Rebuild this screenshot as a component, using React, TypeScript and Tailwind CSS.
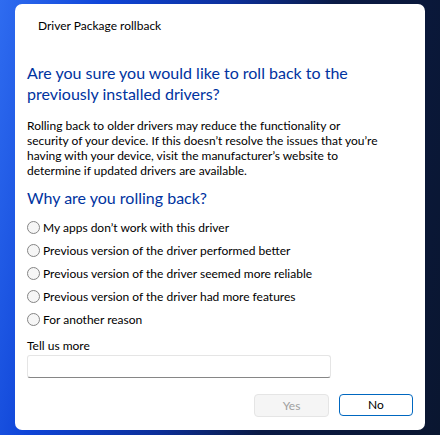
import React from "react";

const reasons = [
  "My apps don\u2019t work with this driver",
  "Previous version of the driver performed better",
  "Previous version of the driver seemed more reliable",
  "Previous version of the driver had more features",
  "For another reason",
];

function Radio({ label }: { label: string }) {
  return (
    <div className="flex items-center h-[23px]">
      <span className="w-[13px] h-[13px] rounded-full border border-[#858585] bg-[#f6f6f6] shrink-0" />
      <span className="ml-[3px] text-[12px] text-black leading-[15px]">{label}</span>
    </div>
  );
}

export default function App() {
  return (
    <div
      className="w-[440px] h-[435px] overflow-hidden bg-[linear-gradient(100deg,#2f6cf0_0%,#0f45d8_20%,#0c2f9a_45%,#0a1a45_65%,#0a1630_100%)] pt-[4px] pl-[15px]"
      style={{ fontFamily: 'Lato, "Noto Sans", sans-serif' }}
    >
      <div className="w-[410px] h-[426px] bg-white rounded-[7px] flex flex-col pl-[12px] pr-[12px]">
        <div className="pl-[11px] pt-[14px] h-[48px] text-[12px] leading-[16px] text-black">
          Driver Package rollback
        </div>
        <div className="mt-[10px] text-[16px] leading-[21px] text-[#0033a0]">
          Are you sure you would like to roll back to the
          <br />
          previously installed drivers?
        </div>
        <div className="mt-[14px] text-[12px] leading-[15px] text-black">
          Rolling back to older drivers may reduce the functionality or
          <br />
          security of your device. If this doesn{"\u2019"}t resolve the issues that you{"\u2019"}re
          <br />
          having with your device, visit the manufacturer{"\u2019"}s website to
          <br />
          determine if updated drivers are available.
        </div>
        <div className="mt-[9px] text-[16px] leading-[21px] text-[#0033a0]">
          Why are you rolling back?
        </div>
        <div className="mt-[8px] flex flex-col">
          {reasons.map((r) => (
            <Radio key={r} label={r} />
          ))}
        </div>
        <div className="mt-[7px] text-[12px] leading-[16px] text-black">Tell us more</div>
        <div className="mt-[1px] w-[304px] h-[23px] border border-[#e5e5e5] border-b-[#868686] rounded-[3px] bg-white" />
        <div className="mt-[16px] flex justify-end gap-[10px]">
          <div className="w-[75px] h-[23px] bg-[#f5f5f5] border border-[#e5e5e5] rounded-[4px] flex items-center justify-center text-[12px] text-[#a0a0a0]">
            Yes
          </div>
          <div className="w-[74px] h-[22px] bg-white border border-[#0067c0] rounded-[4px] flex items-center justify-center text-[12px] text-black">
            No
          </div>
        </div>
      </div>
    </div>
  );
}
